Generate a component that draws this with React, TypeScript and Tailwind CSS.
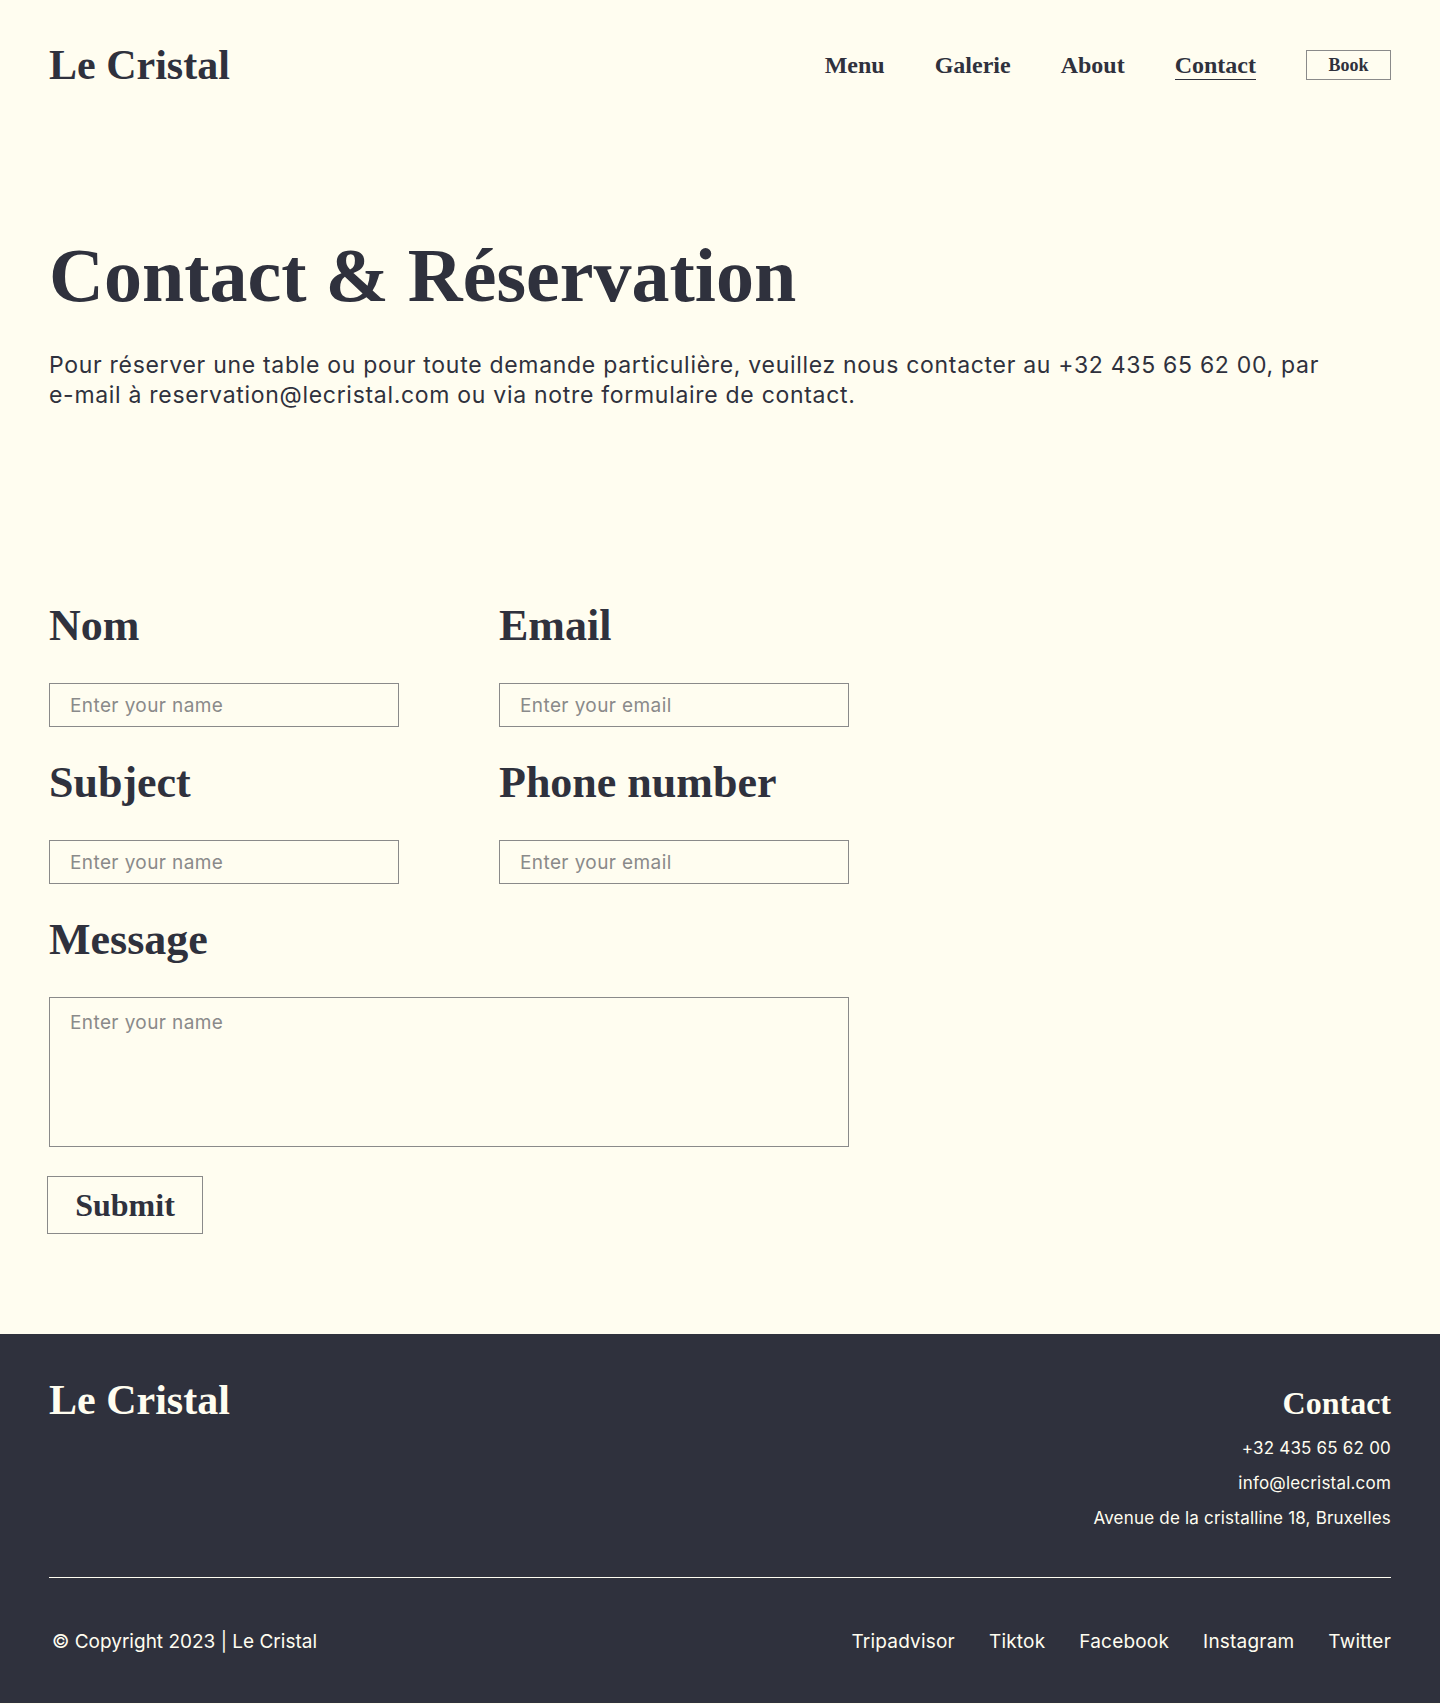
import React from 'react'

const serif = "font-['Liberation_Serif',serif]"
const sans = "font-['Inter',sans-serif]"

const Field = ({ label, placeholder }: { label: string; placeholder: string }) => {
  return (
    <div className='flex flex-col'>
      <label className={`${serif} font-bold text-[44px] leading-none mb-[35px]`}>{label}</label>
      <input
        placeholder={placeholder}
        className={`${sans} h-[44px] w-full border border-[#8a8a8a] bg-transparent px-[20px] text-[19px] tracking-[0.4px] text-[#2f313d] placeholder:text-[#8a8a8a] outline-none`}
      />
    </div>
  )
}

const App = () => {
  return (
    <div className='min-h-screen bg-[#fffdf0] text-[#2f313d]'>
      {/* header */}
      <header className='h-[129px] px-[49px] flex items-center justify-between'>
        <div className={`${serif} font-bold text-[42px] leading-none`}>Le Cristal</div>
        <nav className={`${serif} font-bold flex items-center gap-[50px] text-[24px] leading-none`}>
          <a href='#'>Menu</a>
          <a href='#'>Galerie</a>
          <a href='#'>About</a>
          <a href='#' className='border-b-[1.5px] border-[#2f313d] pb-[2px] mt-[3px]'>Contact</a>
          <a href='#' className='border border-[#8a8a8a] h-[30px] w-[85px] flex items-center justify-center text-[18px]'>Book</a>
        </nav>
      </header>

      <main className='px-[49px] pb-[100px]'>
        <h1 className={`${serif} font-bold text-[76px] leading-none mt-[108px]`}>Contact &amp; Réservation</h1>
        <p className={`${sans} text-[23px] leading-[30px] mt-[37px] max-w-[1310px] tracking-[0.7px]`}>
          Pour réserver une table ou pour toute demande particulière, veuillez nous contacter au +32 435 65 62 00, par <span className='whitespace-nowrap'>e-mail</span> à reservation@lecristal.com ou via notre formulaire de contact.
        </p>

        <form className='mt-[194px] w-[800px]' onSubmit={(e) => e.preventDefault()}>
          <div className='grid grid-cols-[350px_350px] gap-x-[100px] gap-y-[34px]'>
            <Field label='Nom' placeholder='Enter your name' />
            <Field label='Email' placeholder='Enter your email' />
            <Field label='Subject' placeholder='Enter your name' />
            <Field label='Phone number' placeholder='Enter your email' />
          </div>
          <div className='flex flex-col mt-[34px]'>
            <label className={`${serif} font-bold text-[44px] leading-none mb-[35px]`}>Message</label>
            <textarea
              placeholder='Enter your name'
              className={`${sans} h-[150px] w-full resize-none border border-[#8a8a8a] bg-transparent px-[20px] py-[11px] text-[19px] tracking-[0.4px] placeholder:text-[#8a8a8a] outline-none`}
            />
          </div>
          <button
            type='submit'
            className={`${serif} font-bold mt-[29px] -ml-[2px] h-[58px] w-[156px] border border-[#8a8a8a] text-[32px] leading-none`}
          >
            Submit
          </button>
        </form>
      </main>

      {/* footer */}
      <footer className='bg-[#2f313d] text-[#fffdf0] px-[49px] pt-[45px] pb-[46px]'>
        <div className='flex items-start justify-between'>
          <div className={`${serif} font-bold text-[42px] leading-none`}>Le Cristal</div>
          <div className='mt-[8px] flex flex-col items-end'>
            <h3 className={`${serif} font-bold text-[32px] leading-none`}>Contact</h3>
            <div className={`${sans} mt-[12px] text-[17px] leading-[35px] tracking-[0.2px] text-right`}>
              <p>+32 435 65 62 00</p>
              <p>info@lecristal.com</p>
              <p>Avenue de la cristalline 18, Bruxelles</p>
            </div>
          </div>
        </div>
        <div className='mt-[41px] h-px bg-[#fffdf0]'></div>
        <div className={`${sans} mt-[49px] flex items-center justify-between text-[19px] leading-[30px]`}>
          <p className='pl-[3px]'>© Copyright 2023 | Le Cristal</p>
          <div className='flex gap-[34px] tracking-[0.2px]'>
            <a href='#'>Tripadvisor</a>
            <a href='#'>Tiktok</a>
            <a href='#'>Facebook</a>
            <a href='#'>Instagram</a>
            <a href='#'>Twitter</a>
          </div>
        </div>
      </footer>
    </div>
  )
}

export default App
